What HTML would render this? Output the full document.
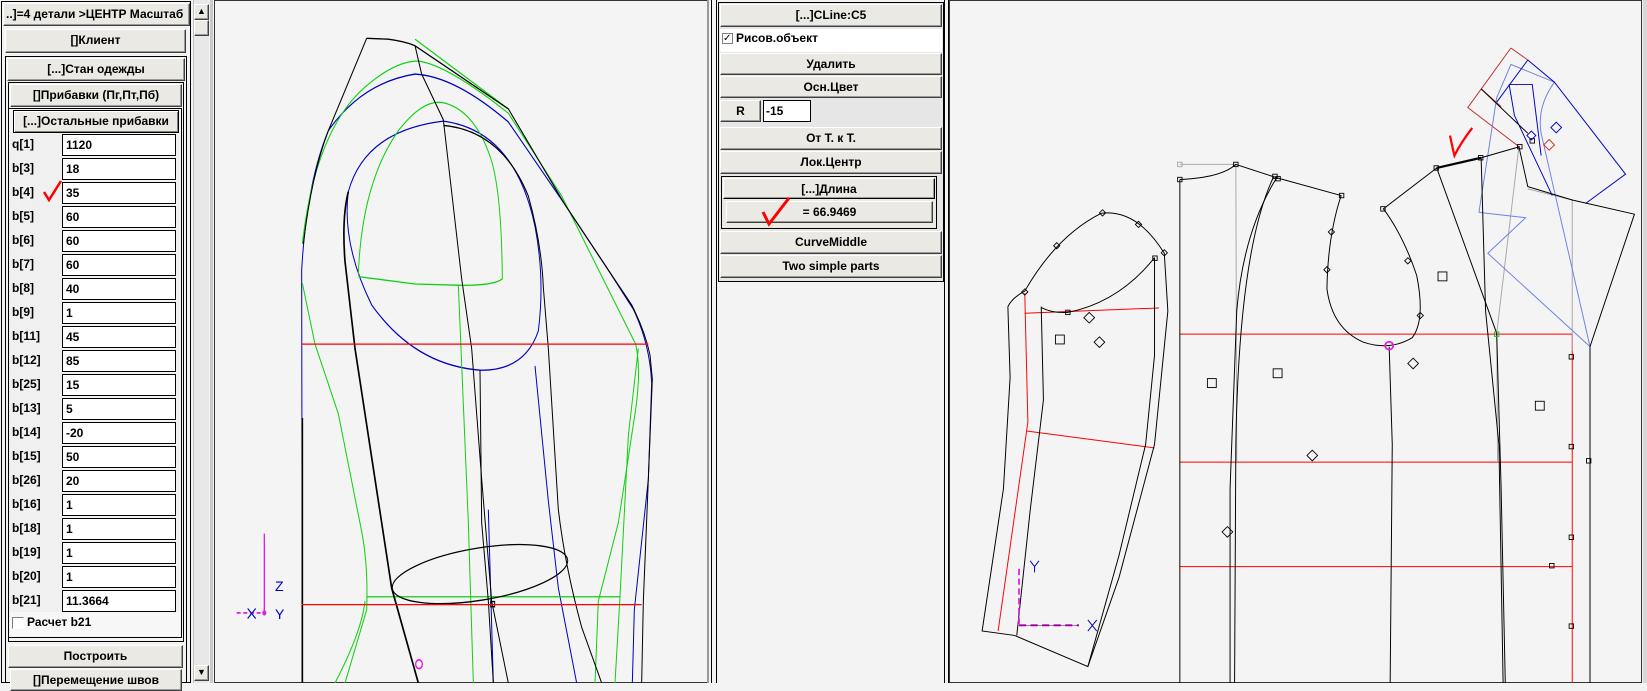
<!DOCTYPE html>
<html><head><meta charset="utf-8">
<style>
*{margin:0;padding:0;box-sizing:border-box}
body{width:1647px;height:683px;background:#f3f3f3;position:relative;overflow:hidden;font:bold 12px "Liberation Sans","DejaVu Sans",sans-serif;color:#000}
.a{position:absolute}
.btn{position:absolute;background:#ebe9e3;border:1px solid;border-color:#fff #404040 #404040 #fff;box-shadow:inset -1px -1px 0 #9a9a9a;text-align:center;line-height:20px;white-space:nowrap;overflow:hidden}
.frm{position:absolute;border:1px solid #000}
.lbl{position:absolute;left:12px;width:48px;font-size:12px}
.inp{position:absolute;left:62px;width:114px;height:22px;background:#fff;border:1px solid #000;padding-left:3px;line-height:20px;font-size:12px}
.row{position:absolute;left:10px;width:170px;height:24px;background:#f0f0f0}
</style></head><body>
<!-- left panel -->
<div class="a" style="left:0;top:0;width:213px;height:683px;background:#f3f3f3"></div>
<div class="frm" style="left:1px;top:1px;width:190px;height:682px;border-color:#000"></div>
<div class="btn" style="left:3px;top:3px;width:187px;height:23px;text-align:left;padding-left:2px">..]=4 детали &gt;ЦЕНТР Масштаб</div>
<div class="btn" style="left:5px;top:29px;width:181px;height:24px">[]Клиент</div>
<div class="frm" style="left:5px;top:56px;width:182px;height:627px"></div>
<div class="btn" style="left:7px;top:58px;width:178px;height:23px">[...]Стан одежды</div>
<div class="frm" style="left:8px;top:82px;width:176px;height:560px"></div>
<div class="btn" style="left:10px;top:84px;width:172px;height:23px">[]Прибавки (Пг,Пт,Пб)</div>
<div class="frm" style="left:8px;top:108px;width:174px;height:530px"></div>
<div class="btn" style="left:13px;top:110px;width:166px;height:23px;border-color:#000;box-shadow:inset 1px 1px 0 #fff,inset -1px -1px 0 #808080">[...]Остальные прибавки</div>
<div id="rows"></div>
<div class="a" style="left:10px;top:612px;width:170px;height:24px;background:#f7f7f7"></div>
<div class="a" style="left:12px;top:617px;width:12px;height:12px;border:1px solid;border-color:#808080 #fff #fff #808080;background:#fff"></div>
<div class="a" style="left:27px;top:615px;font-weight:bold">Расчет b21</div>
<div class="btn" style="left:8px;top:645px;width:175px;height:23px">Построить</div>
<div class="btn" style="left:10px;top:669px;width:172px;height:22px">[]Перемещение швов</div>
<!-- scrollbar -->
<div class="a" style="left:193px;top:0;width:16px;height:683px;background:#e8e8e8;border-left:1px solid #c0c0c0"></div>
<div class="btn" style="left:194px;top:4px;width:15px;height:16px;line-height:12px;font-size:9px">▲</div>
<div class="btn" style="left:194px;top:20px;width:15px;height:16px"></div>
<div class="btn" style="left:194px;top:665px;width:15px;height:16px;line-height:12px;font-size:9px">▼</div>
<div class="a" style="left:210px;top:0;width:3px;height:683px;background:#c8c8c8"></div>

<!-- canvas 1 -->
<div class="a" style="left:214px;top:0;width:495px;height:683px;border:1px solid #333;background:#f4f4f4"></div>
<svg class="a" style="left:215px;top:0" width="500" height="683" viewBox="0 0 1500 1568" preserveAspectRatio="none" fill="none" stroke-width="3">
<g stroke="#0000c0">
<path d="M262,1568 L260,620 Q275,420 340,300 Q440,190 600,170 Q720,175 880,280 L1050,470 L1180,620 L1255,710 Q1305,790 1310,880 L1300,1100 L1258,1400 L1252,1568"/>
<path d="M685,278 Q900,300 960,520 Q990,640 970,760 Q930,850 800,850 Q600,840 470,700 Q380,560 400,440 Q450,300 685,278"/>
<path d="M960,840 L1000,1150 L1030,1350 L1085,1568"/>
<path d="M820,1170 L835,1568"/>
</g>
<g stroke="#10d010">
<path d="M262,560 Q300,300 450,200 Q540,140 610,140 Q700,150 880,260 L1040,450 L1262,790 Q1280,850 1260,950 L1210,1200 L1150,1380 L1140,1568"/>
<path d="M600,90 L880,250"/>
<path d="M262,650 L300,790 L370,950 L440,1220 Q460,1300 455,1400 L390,1568"/>
<path d="M450,1380 Q440,1450 360,1568"/>
<path d="M430,630 Q440,420 550,300 Q620,230 680,235 Q780,250 830,370 Q860,450 862,640 Q840,655 740,655 L600,652 L430,635"/>
<path d="M730,655 L760,1200 L775,1568"/>
<path d="M455,1370 L1215,1370"/>
<path d="M1270,800 L1240,1000 L1215,1370 L1200,1568"/>
</g>
<g stroke="#000">
<path d="M455,88 L520,90 Q570,95 600,105 L880,250 L1050,470 L1180,620 L1250,700 Q1290,760 1305,815 L1312,870 L1300,1100 L1285,1380 L1280,1568"/>
<path d="M455,88 L340,300 Q290,400 265,560"/>
<path d="M262,960 L262,1568" stroke-width="5"/>
<path d="M600,105 L620,170 L685,275 L740,640 L770,800 L800,1100 L830,1380 L880,1568"/>
<path d="M795,850 L800,1200 L820,1380 L835,1568"/>
<path d="M685,288 Q860,300 940,450 Q980,560 985,660 L1000,800 L1030,1170 Q1050,1300 1100,1440 L1160,1568"/>
<path d="M400,440 Q380,500 390,600 L420,800 L470,1050 L530,1350 L610,1568" stroke-width="5"/>
<ellipse cx="795" cy="1318" rx="265" ry="60" transform="rotate(-7 795 1318)"/>
<rect x="827" y="1381" width="12" height="12"/>
</g>
<g stroke="#ff0000"><path d="M260,790 L1300,790"/><path d="M260,1388 L1280,1388"/></g>
<circle cx="612" cy="1525" r="10" stroke="#e020e0" stroke-width="4"/>
<path d="M148,1225 L148,1407" stroke="#e020e0" stroke-width="4"/>
<path d="M65,1407 L148,1407" stroke="#e020e0" stroke-width="4" stroke-dasharray="12 8"/>
<circle cx="148" cy="1407" r="6" fill="#e020e0"/>
<path d="M98,1397 L122,1420 M122,1397 L98,1420" stroke="#0000c0"/>
</svg>
<div class="a" style="left:275px;top:578px;color:#0000c0;font:14px 'Liberation Sans',sans-serif">Z</div>
<div class="a" style="left:275px;top:606px;color:#0000c0;font:14px 'Liberation Sans',sans-serif">Y</div>

<!-- middle panel -->
<div class="a" style="left:707px;top:0;width:2px;height:683px;background:#999"></div>
<div class="a" style="left:711px;top:0;width:238px;height:683px;border-left:1px solid #000;border-right:1px solid #000;background:#f3f3f3"></div>
<div class="a" style="left:716px;top:0;width:229px;height:683px;border-left:1px solid #000;border-right:1px solid #000;background:#f3f3f3"></div>
<div class="frm" style="left:718px;top:2px;width:226px;height:280px;background:#e6e6e6"></div>
<div class="btn" style="left:720px;top:4px;width:222px;height:23px">[...]CLine:C5</div>
<div class="a" style="left:720px;top:29px;width:222px;height:23px;background:#fff"></div>
<div class="a" style="left:722px;top:33px;width:11px;height:11px;border:1px solid #808080;background:#fff;font-size:10px;line-height:9px">✓</div>
<div class="a" style="left:736px;top:31px">Рисов.объект</div>
<div class="btn" style="left:720px;top:53px;width:222px;height:22px">Удалить</div>
<div class="btn" style="left:720px;top:76px;width:222px;height:22px">Осн.Цвет</div>
<div class="btn" style="left:720px;top:100px;width:41px;height:22px">R</div>
<div class="a" style="left:763px;top:100px;width:48px;height:22px;background:#fff;border:1px solid #000;padding-left:2px;line-height:20px">-15</div>
<div class="btn" style="left:720px;top:127px;width:222px;height:23px">От Т. к Т.</div>
<div class="btn" style="left:720px;top:151px;width:222px;height:23px">Лок.Центр</div>
<div class="frm" style="left:721px;top:176px;width:216px;height:53px;background:#ebe9e3"></div>
<div class="btn" style="left:723px;top:178px;width:212px;height:21px;border-color:#fff #000 #000 #fff">[...]Длина</div>
<div class="btn" style="left:726px;top:201px;width:207px;height:22px">= 66.9469</div>
<div class="btn" style="left:720px;top:231px;width:222px;height:23px">CurveMiddle</div>
<div class="btn" style="left:720px;top:255px;width:222px;height:23px">Two simple parts</div>
<svg class="a" style="left:760px;top:195px" width="40" height="32" fill="none"><path d="M3,17 L9,29 L29,3" stroke="#ff0000" stroke-width="3"/></svg>

<!-- canvas 2 -->
<div class="a" style="left:949px;top:0;width:693px;height:683px;border:1px solid #333;background:#f4f4f4"></div>
<div class="a" style="left:1643px;top:0;width:4px;height:683px;background:#d8d8d8"></div>
<svg class="a" style="left:950px;top:0" width="697" height="683" viewBox="0 0 1568 1537" fill="none" stroke-width="2.2">
<g stroke="#ff0000">
<path d="M168,660 L175,950 L108,1420"/><path d="M168,705 L470,693"/><path d="M172,970 L460,1008"/>
<path d="M517,752 L1400,752 L1400,1568"/><path d="M517,1040 L1400,1040"/><path d="M517,1275 L1400,1275"/>
<path d="M1262,108 L1165,242 L1280,330 M1262,108 L1300,135 M1195,200 L1240,240" stroke="#c03030"/>
</g>
<g stroke="#a8a8a8"><path d="M517,370 L643,370 L645,1040"/><path d="M1280,330 L1230,750 L1232,1040"/><path d="M1300,425 L1400,450 L1400,790"/></g>
<g stroke="#7080e0">
<path d="M1190,478 L1295,490 L1210,570 L1440,780"/>
<path d="M1190,478 L1230,220 L1262,145 L1360,185 Q1320,240 1330,300 L1440,780"/>
</g>
<g stroke="#0000c0">
<path d="M1300,135 L1360,185 L1520,392 L1430,458"/>
<path d="M1258,190 L1310,190 L1330,350 M1258,190 L1270,260 L1355,440"/>
<path d="M1300,135 L1230,230"/>
</g>
<g stroke="#000">
<path d="M130,690 Q140,670 168,655 Q240,530 340,480 Q420,470 482,570 L490,700 L460,1000 L380,1300 L310,1500 L145,1430 L72,1420 L120,1100 L135,850 L130,690"/>
<path d="M205,690 L210,900 L180,1150 L150,1430"/>
<path d="M460,580 L460,800 L440,1000 L380,1250 L310,1500"/>
<path d="M205,692 Q230,705 265,703 Q380,680 460,580"/>
<path d="M517,404 L517,1568"/>
<path d="M517,404 Q610,400 643,370 L735,400 L880,440 Q850,530 848,650 Q860,740 930,770 Q990,790 1040,760 Q1070,720 1050,620 Q1020,530 975,470 L1095,378"/>
<path d="M1095,378 L1195,355" stroke-width="5"/>
<path d="M1195,355 L1282,330"/>
<path d="M735,400 Q660,520 645,700 L630,1100 L630,1568"/>
<path d="M728,398 Q650,560 643,1000 L640,1568"/>
<path d="M988,780 L995,1000 L990,1568"/>
<path d="M1095,378 L1230,750 L1240,1100 L1250,1568"/>
<path d="M1195,355 L1205,700 L1235,1000 L1245,1568"/>
<path d="M1280,330 L1300,420 L1400,450 L1540,482 L1440,780 L1440,1568"/>
<path d="M1195,200 L1300,300"/>
</g>
<g stroke="#000" stroke-width="2">
<rect x="237" y="754" width="20" height="20"/><rect x="579" y="852" width="20" height="20"/><rect x="727" y="830" width="20" height="20"/><rect x="1098" y="612" width="20" height="20"/><rect x="1317" y="903" width="20" height="20"/>
<path d="M313,703 L325,715 L313,727 L301,715Z M336,758 L348,770 L336,782 L324,770Z M815,1013 L827,1025 L815,1037 L803,1025Z M624,1185 L636,1197 L624,1209 L612,1197Z M1042,806 L1054,818 L1042,830 L1030,818Z"/>
<path d="M343,472 L350,479 L343,486 L336,479Z M240,546 L247,553 L240,560 L233,553Z M424,498 L431,505 L424,512 L417,505Z M848,600 L855,607 L848,614 L841,607Z M858,515 L865,522 L858,529 L851,522Z M1030,580 L1037,587 L1030,594 L1023,587Z M1058,703 L1065,710 L1058,717 L1051,710Z M168,650 L175,657 L168,664 L161,657Z M482,562 L489,569 L482,576 L475,569Z"/>
<rect x="512" y="399" width="10" height="10"/><rect x="638" y="365" width="10" height="10"/><rect x="726" y="392" width="10" height="10"/><rect x="733" y="397" width="10" height="10"/><rect x="876" y="435" width="10" height="10"/><rect x="969" y="465" width="10" height="10"/><rect x="1089" y="373" width="10" height="10"/><rect x="1189" y="350" width="10" height="10"/><rect x="1277" y="325" width="10" height="10"/><rect x="456" y="576" width="10" height="10"/><rect x="260" y="698" width="10" height="10"/><rect x="1305" y="312" width="10" height="10"/>
<rect x="1393" y="798" width="10" height="10"/><rect x="1393" y="1000" width="10" height="10"/><rect x="1393" y="1204" width="10" height="10"/><rect x="1393" y="1404" width="10" height="10"/><rect x="1432" y="1032" width="10" height="10"/><rect x="1349" y="1268" width="10" height="10"/>
</g>
<rect x="512" y="365" width="10" height="10" stroke="#aaa"/>
<path d="M1364,275 L1376,287 L1364,299 L1352,287Z M1308,295 L1318,305 L1308,315 L1298,305Z" stroke="#0000c0"/>
<path d="M1348,314 L1360,326 L1348,338 L1336,326Z" stroke="#d03020"/>
<circle cx="988" cy="778" r="9" stroke="#e020e0" stroke-width="4"/>
<rect x="1225" y="747" width="10" height="10" stroke="#20c020"/>
<path d="M1125,305 Q1130,330 1135,350 Q1150,320 1175,288" stroke="#ff0000" stroke-width="5"/>
<path d="M155,1280 L155,1407" stroke="#e020e0" stroke-width="4" stroke-dasharray="14 8"/>
<path d="M155,1407 L290,1407" stroke="#e020e0" stroke-width="5" stroke-dasharray="16 10"/>
<path d="M155,1407 L290,1407" stroke="#000" stroke-width="1"/>
<path d="M180,1262 L190,1275 L200,1262 M190,1275 L190,1288 M310,1395 L330,1420 M330,1395 L310,1420" stroke="#0000c0"/>
</svg>

<script>
var d=[["q[1]","1120"],["b[3]","18"],["b[4]","35"],["b[5]","60"],["b[6]","60"],["b[7]","60"],["b[8]","40"],["b[9]","1"],["b[11]","45"],["b[12]","85"],["b[25]","15"],["b[13]","5"],["b[14]","-20"],["b[15]","50"],["b[26]","20"],["b[16]","1"],["b[18]","1"],["b[19]","1"],["b[20]","1"],["b[21]","11.3664"]];
var h="";for(var i=0;i<d.length;i++){var y=134+i*24;h+='<div class="row" style="top:'+y+'px"></div><div class="lbl a" style="top:'+(y+3)+'px">'+d[i][0]+'</div><div class="inp" style="top:'+y+'px">'+d[i][1]+'</div>';}
h+='<svg class="a" style="left:40px;top:178px" width="24" height="24" fill="none"><path d="M4,14 L9,22 L21,3" stroke="#ff0000" stroke-width="2.5"/></svg>';
document.getElementById("rows").outerHTML=h;
</script>
</body></html>
